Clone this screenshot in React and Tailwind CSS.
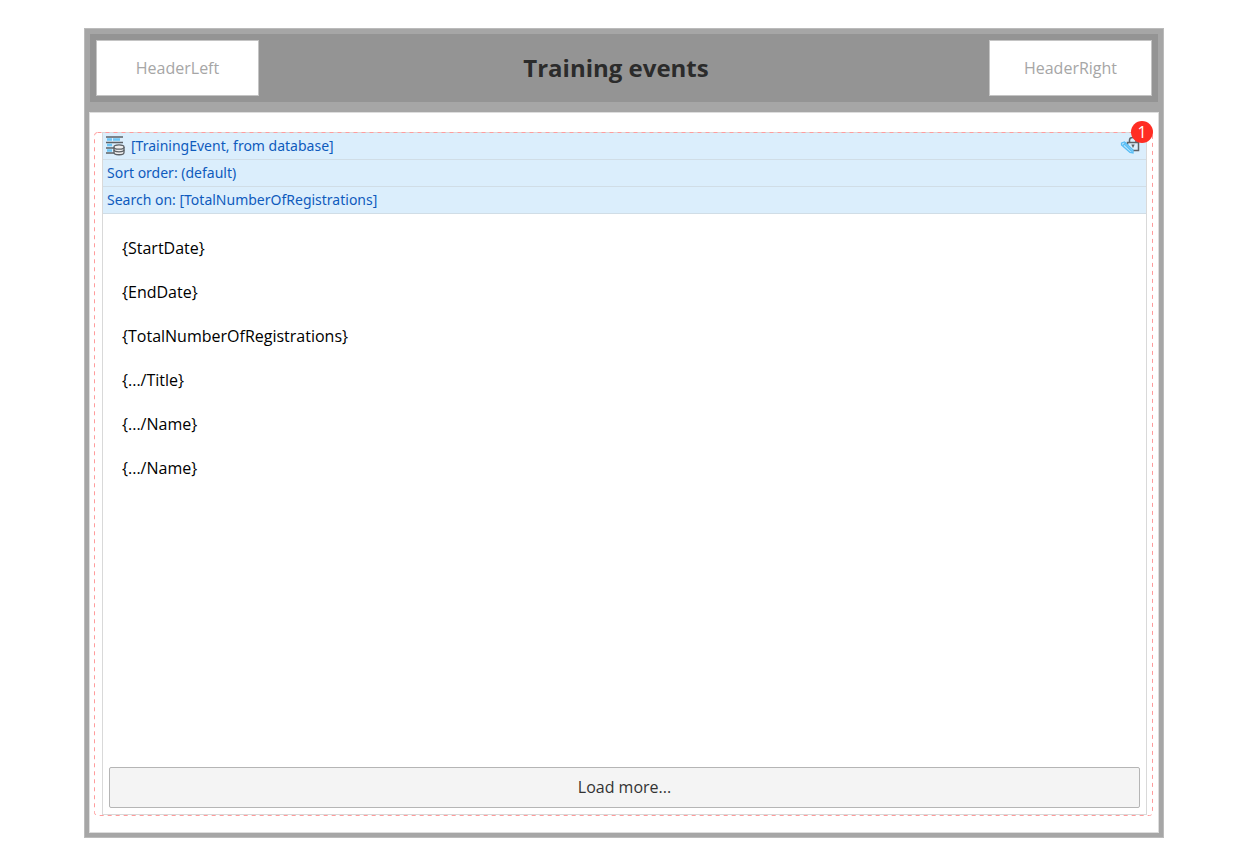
function Placeholder({ children }) {
  return (
    <div className="flex h-14 w-[163px] items-center justify-center border border-[#c4c4c4] bg-white text-base text-[#a6a6a6]">
      {children}
    </div>
  );
}

function DatabaseListIcon() {
  return (
    <svg className="h-5 w-5 shrink-0" viewBox="0 0 20 20" fill="none" aria-hidden="true">
      <path d="M2 3.500H7M8 3.500H15M2 9H7M2 14.500H7" stroke="#6ec6f5" strokeWidth="2.500" />
      <path d="M1 1H18M1 6.500H18M1 12H9M1 17H9" stroke="#5c6166" strokeWidth="1.500" />
      <path d="M9 11V16.500C9 19.500 19 19.500 19 16.500V11" fill="#eeeeee" stroke="#5c6166" strokeWidth="1.300" />
      <path d="M9 13.800C9 16.500 19 16.500 19 13.800" stroke="#5c6166" strokeWidth="1.300" />
      <ellipse cx="14" cy="11" rx="5" ry="2.200" fill="#eeeeee" stroke="#5c6166" strokeWidth="1.300" />
    </svg>
  );
}

function EditLockIcon() {
  return (
    <svg className="h-5 w-5 shrink-0" viewBox="0 0 20 20" fill="none" aria-hidden="true">
      <path d="M9.500 7V4C9.500 0.500 16 0.500 16 4V7" stroke="#5c6166" strokeWidth="1.500" />
      <path d="M7.500 10V6.500H18.500V14.500H13" stroke="#5c6166" strokeWidth="1.500" />
      <path d="M11.300 8.500H14.700L13 12Z" fill="#5c6166" />
      <path d="M1.500 7L4.500 6L13 14V17L10 16.500L1.500 9Z" fill="#b5e3fb" stroke="#57bdf5" strokeWidth="1.300" />
      <path d="M3 9.500L6 6.500M4.500 8L12 15.500" stroke="#57bdf5" strokeWidth="1.200" />
    </svg>
  );
}

const attributes = [
  "{StartDate}",
  "{EndDate}",
  "{TotalNumberOfRegistrations}",
  "{.../Title}",
  "{.../Name}",
  "{.../Name}",
];

export default function App() {
  return (
    <div className="bg-white pt-7 pr-[87px] pb-7 pl-[84px] font-['Open_Sans',sans-serif]">
      <div className="border border-[#bbbbbb] bg-[#a6a6a6] p-1">
        <header className="m-px mb-[10px] flex items-center justify-between bg-[#949494] p-1.5">
          <Placeholder>HeaderLeft</Placeholder>
          <h1 className="flex-1 pr-4 text-center text-2xl font-bold text-[#2b2b2b]">Training events</h1>
          <Placeholder>HeaderRight</Placeholder>
        </header>

        <main className="border border-[#dddddd] bg-white px-[5px] pt-[19px] pb-[17px]">
          <div className="relative pr-1.5 pl-[7px]">
            {/* Listening region outline */}
            <svg className="pointer-events-none absolute inset-0 z-10 h-full w-full overflow-visible" fill="none" aria-hidden="true">
              <rect x="-0.500" y="0.500" width="100%" height="100%" rx="3" stroke="#ff9c9c" strokeDasharray="4 4" />
            </svg>

            <section className="border border-[#d9d9d9]">
              <div className="bg-[#dbeefc] font-['Noto_Sans',sans-serif] text-sm text-[#0f5bbd]">
                <div className="flex h-[27px] items-center justify-between border-b border-[#d0dde6] pr-1.5 pl-0.5">
                  <span className="flex items-center gap-1.5">
                    <DatabaseListIcon />
                    [TrainingEvent, from database]
                  </span>
                  <EditLockIcon />
                </div>
                <div className="flex h-[27px] items-center border-b border-[#d0dde6] px-1">Sort order: (default)</div>
                <div className="flex h-[27px] items-center border-b border-[#d0dde6] px-1">
                  Search on: [TotalNumberOfRegistrations]
                </div>
              </div>

              <ul className="flex min-h-[553px] flex-col gap-5 px-[19px] pt-[22px] text-base text-black">
                {attributes.map((attribute, index) => (
                  <li key={index}>{attribute}</li>
                ))}
              </ul>

              <div className="px-1.5 pb-1.5">
                <button
                  type="button"
                  className="h-[41px] w-full rounded-xs border border-[#b5b5b5] bg-[#f4f4f4] pb-0.5 text-base text-[#333333]"
                >
                  Load more...
                </button>
              </div>
            </section>

            <span className="absolute -top-[11px] right-0 z-20 flex h-[22px] w-[22px] items-center justify-center rounded-full bg-[#ff2d23] text-base text-white">
              1
            </span>
          </div>
        </main>
      </div>
    </div>
  );
}
